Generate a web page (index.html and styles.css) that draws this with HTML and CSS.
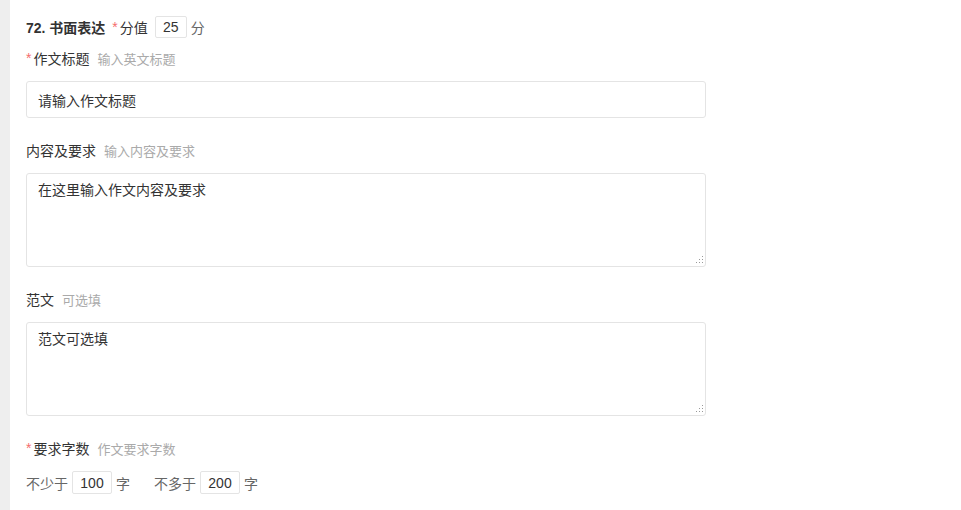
FILE: index.html
```html
<!DOCTYPE html>
<html lang="zh-CN">
<head>
  <meta charset="UTF-8">
  <meta name="viewport" content="width=device-width, initial-scale=1.0">
  <title>书面表达</title>
  <link rel="stylesheet" href="styles.css">
</head>
<body>
  <div class="page">
    <div class="side-bar"></div>
    <div class="question">
      <div class="title-row">
        <span class="q-title">72. 书面表达</span>
        <span class="req">*</span>
        <span class="score-label">分值</span>
        <input type="text" class="score-input" value="25">
        <span class="unit">分</span>
      </div>

      <div class="field-label first">
        <span class="req">*</span>作文标题<span class="hint">输入英文标题</span>
      </div>
      <input type="text" class="text-input" value="请输入作文标题">

      <div class="field-label">
        内容及要求<span class="hint">输入内容及要求</span>
      </div>
      <div class="area-wrap">
        <textarea class="text-area">在这里输入作文内容及要求</textarea>
        <svg class="grip" width="8" height="8" viewBox="0 0 8 8">
          <rect x="6" y="0" width="1" height="1"/>
          <rect x="3" y="3" width="1" height="1"/>
          <rect x="6" y="3" width="1" height="1"/>
          <rect x="0" y="6" width="1" height="1"/>
          <rect x="3" y="6" width="1" height="1"/>
          <rect x="6" y="6" width="1" height="1"/>
        </svg>
      </div>

      <div class="field-label">
        范文<span class="hint">可选填</span>
      </div>
      <div class="area-wrap">
        <textarea class="text-area">范文可选填</textarea>
        <svg class="grip" width="8" height="8" viewBox="0 0 8 8">
          <rect x="6" y="0" width="1" height="1"/>
          <rect x="3" y="3" width="1" height="1"/>
          <rect x="6" y="3" width="1" height="1"/>
          <rect x="0" y="6" width="1" height="1"/>
          <rect x="3" y="6" width="1" height="1"/>
          <rect x="6" y="6" width="1" height="1"/>
        </svg>
      </div>

      <div class="field-label">
        <span class="req">*</span>要求字数<span class="hint">作文要求字数</span>
      </div>
      <div class="count-row">
        <span class="count-item">不少于 <input type="text" class="count-input" value="100"> 字</span>
        <span class="count-item">不多于 <input type="text" class="count-input" value="200"> 字</span>
      </div>
    </div>
  </div>
</body>
</html>
```

FILE: styles.css
```css
body {
  margin: 0;
  padding: 0;
  background-color: #fff;
  font-family: "Liberation Sans", "Noto Sans CJK SC", sans-serif;
  font-size: 14px;
  color: #333;
}

.page {
  display: flex;
  min-height: 510px;
}

.side-bar {
  width: 10px;
  background-color: #eeeeee;
  flex-shrink: 0;
}

.question {
  padding: 16px 0 0 16px;
  width: 680px;
  display: flex;
  flex-direction: column;
}

.title-row {
  display: flex;
  align-items: center;
  height: 22px;
}

.q-title {
  font-weight: bold;
  margin-right: 7px;
}

.req {
  color: #f56c6c;
  margin-right: 2px;
}

.score-label {
  margin-right: 7px;
}

.score-input, .count-input {
  box-sizing: border-box;
  font-family: inherit;
  font-size: 14px;
  color: #333;
  text-align: center;
  border: 1px solid #e4e4e4;
  border-radius: 2px;
  outline: none;
  padding: 0;
}

.score-input {
  width: 32px;
  height: 22px;
}

.unit {
  color: #666;
  margin-left: 4px;
}

.field-label {
  display: flex;
  align-items: center;
  height: 20px;
  margin-top: 22px;
  margin-bottom: 13px;
}

.field-label.first {
  margin-top: 10px;
}

.hint {
  color: #aaaaaa;
  font-size: 13px;
  margin-left: 8px;
}

.text-input {
  box-sizing: border-box;
  width: 680px;
  height: 37px;
  padding: 0 11px;
  font-family: inherit;
  font-size: 14px;
  color: #333;
  border: 1px solid #e4e4e4;
  border-radius: 3px;
  outline: none;
}

.area-wrap {
  position: relative;
  height: 94px;
}

.text-area {
  display: block;
  box-sizing: border-box;
  width: 680px;
  height: 94px;
  padding: 6px 11px;
  font-family: inherit;
  font-size: 14px;
  line-height: 20px;
  color: #333;
  border: 1px solid #e4e4e4;
  border-radius: 3px;
  outline: none;
  resize: none;
}

.grip {
  position: absolute;
  right: 2px;
  bottom: 3px;
  fill: #999;
}

.count-row {
  display: flex;
  gap: 24px;
  color: #666;
}

.count-item {
  display: flex;
  align-items: center;
  gap: 4px;
}

.count-input {
  width: 40px;
  height: 23px;
}
```
